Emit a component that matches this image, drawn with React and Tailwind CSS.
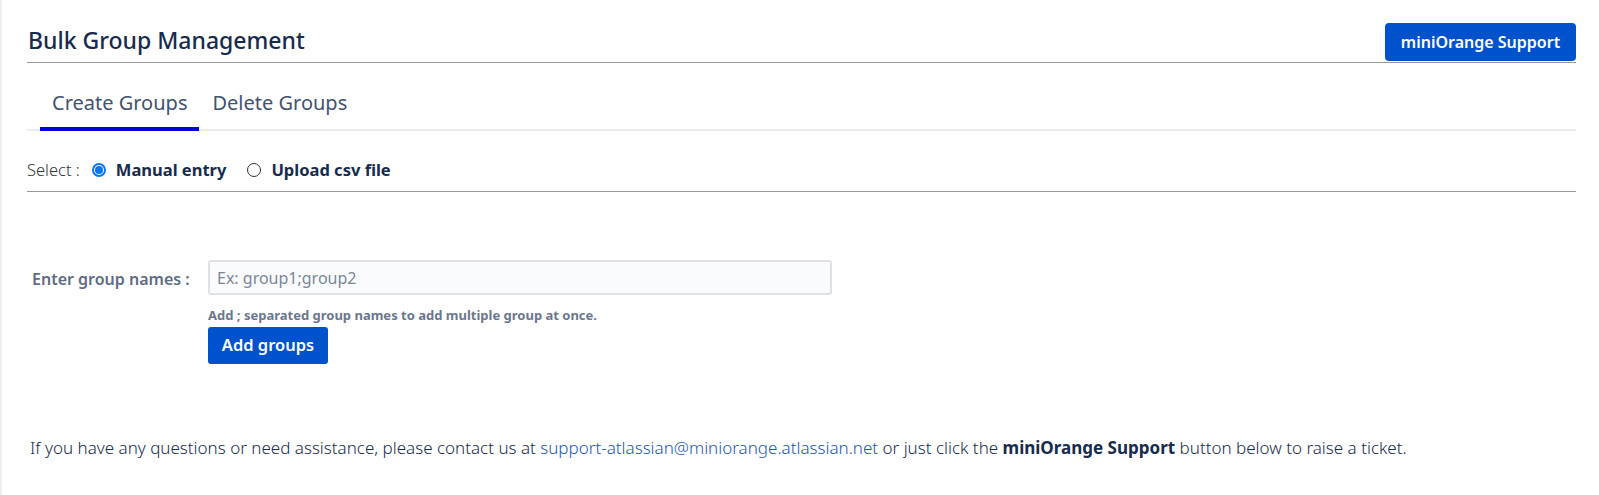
export default function App() {
  return (
    <div
      className="min-h-[495px] bg-white border-l-2 border-[#eeeeee] pl-[25px] pr-[23px] pt-[23px] text-[#172b4d]"
      style={{ fontFamily: '"Noto Sans", "Open Sans", sans-serif' }}
    >
      {/* header */}
      <div className="flex items-end justify-between border-b border-[#999999] pb-[1px]">
        <h1 className="text-[23px] leading-[32px] font-medium mb-[5px] pl-[1px]">Bulk Group Management</h1>
        <button className="h-[38px] w-[191px] rounded-[4px] bg-[#0052cc] text-white text-[16px] font-semibold">
          miniOrange Support
        </button>
      </div>

      {/* tabs */}
      <div className="flex border-b-2 border-[#ebecf0] mt-[17px] pl-[13px]">
        <div className="px-[12px] pb-[10px] pt-[9px] text-[20px] leading-[28px] text-[#42526e] border-b-4 border-[#0000dd] -mb-[2px]">
          Create Groups
        </div>
        <div className="px-[13px] pb-[10px] pt-[9px] text-[20px] leading-[28px] text-[#42526e]">Delete Groups</div>
      </div>

      {/* select */}
      <div className="flex items-center border-b border-[#999999] pt-[28px] pb-[10px] text-[16.5px] leading-[22px]">
        <span className="text-[#333333] font-light">Select :</span>
        <label className="flex items-center ml-[12px]">
          <span className="w-[14px] h-[14px] rounded-full border-2 border-[#0b75f5] flex items-center justify-center">
            <span className="w-[8px] h-[8px] rounded-full bg-[#0b75f5]" />
          </span>
          <span className="ml-[10px] font-bold">Manual entry</span>
        </label>
        <label className="flex items-center ml-[21px]">
          <span className="w-[14px] h-[14px] rounded-full border border-[#333333]" />
          <span className="ml-[10px] font-bold">Upload csv file</span>
        </label>
      </div>

      {/* form */}
      <div className="flex mt-[68px]">
        <div className="w-[181px] pl-[5px] pt-[7px] text-[16px] font-semibold text-[#5e6c84]">Enter group names :</div>
        <div className="flex flex-col">
          <input
            placeholder="Ex: group1;group2"
            className="w-[624px] h-[35px] rounded-[3px] border-2 border-[#dfe1e6] bg-[#fafbfc] px-[7px] text-[16px] placeholder-[#7a869a] outline-none"
          />
          <div className="mt-[12px] text-[13px] leading-[16px] font-bold text-[#6b778c]">
            Add ; separated group names to add multiple group at once.
          </div>
          <button className="mt-[4px] w-[120px] h-[37px] rounded-[3px] bg-[#0052cc] text-white text-[16.5px] font-semibold">
            Add groups
          </button>
        </div>
      </div>

      {/* footer */}
      <p className="mt-[72px] pl-[3px] text-[17px] leading-[24px] text-[#172b4d] font-light">
        If you have any questions or need assistance, please contact us at{" "}
        <a className="text-[#1d56b4]" href="#">support-atlassian@miniorange.atlassian.net</a> or just click the{" "}
        <b className="font-bold">miniOrange Support</b> button below to raise a ticket.
      </p>
    </div>
  );
}
